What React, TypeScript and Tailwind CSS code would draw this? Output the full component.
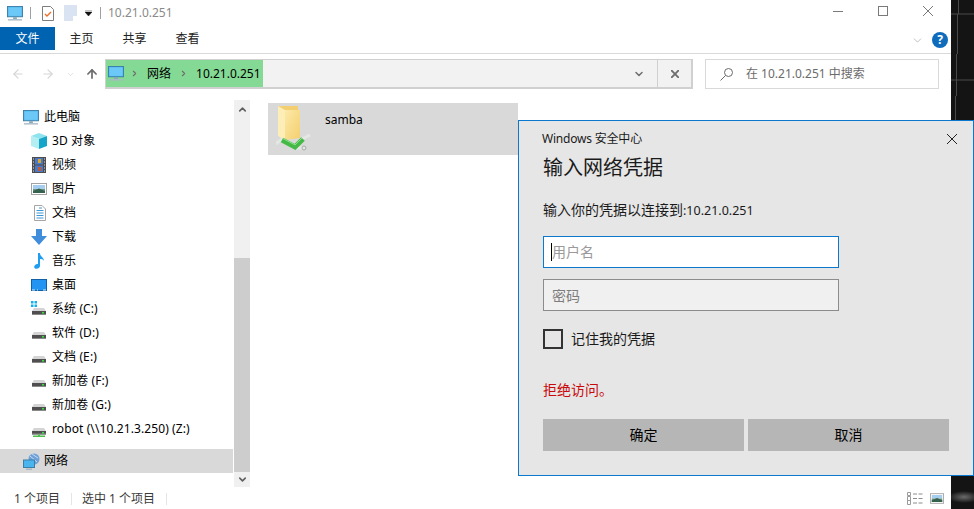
import React from 'react';
import { ArrowLeft, ArrowRight, ArrowUp, ChevronDown, ChevronRight, ChevronUp } from 'lucide-react';

const font = { fontFamily: '"Noto Sans", "Noto Sans CJK SC", sans-serif' };

const Monitor = ({ className = '' }: { className?: string }) => (
  <svg viewBox="0 0 17 16" className={className}>
    <rect x="0.5" y="0.5" width="16" height="11" fill="#4ab4ee" stroke="#3b7ea6" />
    <rect x="1.5" y="1.5" width="14" height="9" fill="#6cc9f7" />
    <rect x="6.5" y="12" width="4" height="2" fill="#8aa6b8" />
    <rect x="1" y="14" width="15" height="1.5" fill="#a9bac6" />
  </svg>
);

const Cube = () => (
  <svg viewBox="0 0 16 16" className="w-4 h-4">
    <path d="M8 0 L16 3 L8 6 L0 3 Z" fill="#8fe3ee" />
    <path d="M0 3 L8 6 V16 L0 13 Z" fill="#b5eef2" />
    <path d="M16 3 L8 6 V16 L16 13 Z" fill="#14a5c8" />
  </svg>
);

const Film = () => (
  <svg viewBox="0 0 14 16" className="w-[14px] h-4">
    <rect x="0" y="0" width="14" height="16" fill="#4d4d4d" />
    <rect x="3" y="1" width="8" height="6.5" fill="#4a79c9" />
    <rect x="3" y="8.5" width="8" height="6.5" fill="#4a79c9" />
    <rect x="6" y="2" width="3" height="4" fill="#d6a92c" />
    <rect x="6" y="10" width="3" height="4" fill="#c9592c" />
    <path d="M1 2h1M1 5h1M1 8h1M1 11h1M1 14h1M12 2h1M12 5h1M12 8h1M12 11h1M12 14h1" stroke="#e5e5e5" />
  </svg>
);

const Picture = ({ className = 'w-4 h-3' }: { className?: string }) => (
  <svg viewBox="0 0 16 12" className={className}>
    <rect x="0.5" y="0.5" width="15" height="11" fill="#fff" stroke="#a3a3a3" />
    <rect x="2" y="2" width="12" height="4" fill="#a5cdf0" />
    <rect x="2" y="6" width="12" height="4" fill="#6d9a82" />
    <path d="M2 8 L8 5.5 L14 8 V10 H2 Z" fill="#35614f" />
  </svg>
);

const Doc = () => (
  <svg viewBox="0 0 13 16" className="w-[13px] h-4">
    <path d="M1.5 .5 H9 L12.5 4 V15.5 H1.5 Z" fill="#fff" stroke="#a5a5a5" />
    <path d="M6 3h3M3.5 5.5h7M3.5 8h7M3.5 10.5h7M3.5 13h7" stroke="#3f97d8" />
  </svg>
);

const Download = () => (
  <svg viewBox="0 0 16 16" className="w-4 h-4">
    <path d="M5 0 H11 V7 H16 L8 16 L0 7 H5 Z" fill="#3f8ddb" />
  </svg>
);

const Music = () => (
  <svg viewBox="0 0 12 16" className="w-3 h-4">
    <path d="M5 0 H7 C7 4 11 4 11 8 C10 6 8 6 7 6 V13 C7 15 4 16.5 2 15.5 C0 14 2 10.5 5 11 Z" fill="#1f9df0" />
  </svg>
);

const Desktop = () => (
  <svg viewBox="0 0 16 12" className="w-4 h-3">
    <rect x="0.5" y="0.5" width="15" height="11" fill="#2295f2" stroke="#0f62a8" />
    <path d="M1 11h3M6 11h1M12 11h3" stroke="#d8eefc" />
  </svg>
);

const Drive = ({ win, net }: { win?: boolean; net?: boolean }) => (
  <svg viewBox="0 0 16 16" className="w-4 h-4">
    {win && <path d="M0 0h2.5v2.5H0zM3.5 0H6v2.5H3.5zM0 3.5h2.5V6H0zM3.5 3.5H6V6H3.5z" fill="#12b0ec" />}
    <path d="M3 7 H13 L15 10 H1 Z" fill="#d4d4d4" />
    <rect x="1" y="10" width="14" height={net ? 3.5 : 4} fill="#4f4f4f" />
    <rect x="1" y={net ? 12.5 : 13} width="14" height="1" fill="#8a8a8a" />
    <rect x="11" y="11" width="2" height="1.5" fill="#37e04a" />
    {net && <path d="M7 13.5h2v1h5v1.5H2v-1.5h5z" fill="#4cc04a" />}
  </svg>
);

const NetIcon = () => (
  <svg viewBox="0 0 17 17" className="w-[17px] h-[17px]">
    <circle cx="11" cy="6" r="5.5" fill="#6d9fd8" />
    <path d="M7 3 L14 9 M9 1 L15 5" stroke="#c6dcf2" />
    <rect x="0.5" y="7" width="11" height="7.5" fill="#4ab4ee" stroke="#3b7ea6" />
    <rect x="3" y="15.5" width="6" height="1.5" fill="#a9bac6" />
  </svg>
);

const Share = () => (
  <svg viewBox="0 0 36 46" className="w-9 h-[46px]">
    <defs>
      <linearGradient id="folderFront" x1="0" y1="0" x2="1" y2="1">
        <stop offset="0" stopColor="#fce9a8" />
        <stop offset="1" stopColor="#f4cf6e" />
      </linearGradient>
    </defs>
    <path d="M2 0 H22 V30 H2 Z" fill="#f3cf72" />
    <path d="M2 0 L9 4 V34 L2 30 Z" fill="#fdeeb8" />
    <path d="M9 4 H24 V32 L9 34 Z" fill="url(#folderFront)" />
    <path d="M-1 38 L7 33" stroke="#e4e8e5" strokeWidth="3" />
    <path d="M26 33 L34 29" stroke="#e4e8e5" strokeWidth="3" />
    <path d="M20 42 L28 42" stroke="#e4e8e5" strokeWidth="3" />
    <path d="M6 34 L19 41 L27 33" stroke="#45b945" strokeWidth="5" fill="none" />
    <path d="M7 32.5 L19 39 L26 32" stroke="#8be08b" strokeWidth="1" fill="none" />
    <circle cx="28" cy="42" r="2" fill="#e4e8e5" stroke="#a5aca8" />
  </svg>
);

const Cross = ({ className = '', stroke = '#000', weight = 1 }: { className?: string; stroke?: string; weight?: number }) => (
  <svg viewBox="0 0 10 10" className={className}>
    <path d="M0 0 L10 10 M10 0 L0 10" stroke={stroke} strokeWidth={weight} />
  </svg>
);

const navItems: { label: string; icon: React.ReactNode }[] = [
  { label: '3D 对象', icon: <Cube /> },
  { label: '视频', icon: <Film /> },
  { label: '图片', icon: <Picture /> },
  { label: '文档', icon: <Doc /> },
  { label: '下载', icon: <Download /> },
  { label: '音乐', icon: <Music /> },
  { label: '桌面', icon: <Desktop /> },
  { label: '系统 (C:)', icon: <Drive win /> },
  { label: '软件 (D:)', icon: <Drive /> },
  { label: '文档 (E:)', icon: <Drive /> },
  { label: '新加卷 (F:)', icon: <Drive /> },
  { label: '新加卷 (G:)', icon: <Drive /> },
  { label: 'robot (\\\\10.21.3.250) (Z:)', icon: <Drive net /> },
];

const Nav = () => (
  <div className="w-[250px] h-[387px] flex shrink-0">
    <div className="w-[233px] pt-[5px] text-[12px] text-black">
      <div className="h-6 flex items-center pl-[23px] gap-[5px]">
        <Monitor className="w-4 h-[15px]" />
        <span>此电脑</span>
      </div>
      {navItems.map((item) => (
        <div key={item.label} className="h-6 flex items-center">
          <div className="w-[52px] pl-[31px] pr-[5px] flex justify-center shrink-0">{item.icon}</div>
          <span className="whitespace-nowrap tracking-[0.1px]">{item.label}</span>
        </div>
      ))}
      <div className="mt-[8px] h-6 flex items-center pl-[23px] gap-[4px] bg-[#d9d9d9]">
        <NetIcon />
        <span>网络</span>
      </div>
    </div>
    <div className="w-4 ml-px bg-[#f0f0f0] flex flex-col">
      <div className="h-[158px] pt-1 flex justify-center">
        <ChevronUp size={11} strokeWidth={3.5} className="text-[#606060]" />
      </div>
      <div className="h-[214px] bg-[#cdcdcd]" />
      <div className="flex-1 flex items-center justify-center">
        <ChevronDown size={11} strokeWidth={3.5} className="text-[#606060]" />
      </div>
    </div>
  </div>
);

const Dialog = () => (
  <div className="absolute left-[518px] top-[120px] w-[456px] h-[356px] border border-[#0b78cf] bg-[#e6e6e6] pl-6 pr-6 text-black">
    <div className="flex justify-between items-center pt-[7px] h-[28px] text-[12px] text-[#1a1a1a]">
      <span className="tracking-[-0.2px] -ml-px">Windows 安全中心</span>
      <Cross className="w-[10px] h-[10px] mr-[-8px]" stroke="#222" />
    </div>
    <div className="text-[20px] leading-[28px] mt-[5px] text-[#1a1a1a]">输入网络凭据</div>
    <div className="text-[14px] leading-[18px] mt-[19px] text-[#1a1a1a]">
      输入你的凭据以连接到<span className="text-[12.5px]">:10.21.0.251</span>
    </div>
    <div className="mt-[16px] w-[296px] h-[32px] border-[1.5px] border-[#0b78cf] bg-white flex items-center pl-[7px] pb-px text-[14px] text-[#9a9a9a]">
      <span className="w-px h-[18px] bg-black" />
      <span>用户名</span>
    </div>
    <div className="mt-[11px] w-[296px] h-[32px] border-[1.5px] border-[#8c8c8c] bg-[#f0f0f0] flex items-center pl-[8px] text-[14px] text-[#7d7d7d]">
      密码
    </div>
    <div className="mt-[18px] h-5 flex items-center gap-2 text-[14px] text-[#1a1a1a]">
      <div className="w-5 h-5 border-2 border-[#333]" />
      <span className="-mt-px">记住我的凭据</span>
    </div>
    <div className="mt-[32px] text-[14px] leading-[18px] text-[#c90a0a]">拒绝访问。</div>
    <div className="mt-[20px] flex gap-1 w-[406px] text-[14px]">
      <div className="flex-1 h-8 pb-px bg-[#b6b6b6] flex items-center justify-center">确定</div>
      <div className="flex-1 h-8 pb-px bg-[#b6b6b6] flex items-center justify-center">取消</div>
    </div>
  </div>
);

const DesktopStrip = () => (
  <svg viewBox="0 0 23 509" className="w-[23px] h-[509px] shrink-0 bg-[#141414]">
    <defs>
      <radialGradient id="glow" cx="0.5" cy="0.5" r="0.5">
        <stop offset="0" stopColor="#6a6a6a" />
        <stop offset="1" stopColor="#141414" />
      </radialGradient>
    </defs>
    <path d="M0 14H23M0 80H23" stroke="#4a4a4a" />
    <path d="M7.5 0V14M6.5 14V54M5.5 54V96M4.5 96V120" stroke="#4a4a4a" />
    <ellipse cx="13" cy="497" rx="16" ry="6" fill="url(#glow)" />
  </svg>
);

export default function App() {
  return (
    <div style={font} className="relative w-[974px] h-[509px] overflow-hidden flex">
      <div className="w-[951px] h-full bg-white flex flex-col shrink-0">
        {/* title bar */}
        <div className="h-[27px] flex items-center pl-[7px] pb-px text-[12px] text-[#8a8a8a] shrink-0">
          <Monitor className="w-4 h-[15px]" />
          <span className="ml-[7px] w-px h-3 bg-[#a0a0a0]" />
          <svg viewBox="0 0 12 15" className="ml-[11px] w-3 h-[15px]">
            <path d="M.5.5H8.5L11.5 3.5V14.5H.5Z" fill="#fff" stroke="#7d7d7d" />
            <path d="M3 8l2 2 4-4" stroke="#e8702a" strokeWidth="1.4" fill="none" />
          </svg>
          <svg viewBox="0 0 13 16" className="ml-[10px] w-[13px] h-4">
            <rect x="0" y="0" width="13" height="16" fill="#d9e3f2" />
            <rect x="9" y="11" width="4" height="5" fill="#fff" />
          </svg>
          <svg viewBox="0 0 7 6" className="ml-[8px] w-[7px] h-[6px]">
            <path d="M0 0h7M0 2h7L3.5 6Z" fill="#111" stroke="#111" strokeWidth=".5" />
          </svg>
          <span className="ml-[8px] w-px h-3 bg-[#a0a0a0]" />
          <span className="ml-[7px]">10.21.0.251</span>
          <div className="ml-auto flex items-center gap-[35px] pr-[18px] mb-[4px]">
            <svg viewBox="0 0 10 10" className="w-[10px] h-[10px]">
              <path d="M0 5.5H10" stroke="#7a7a7a" />
            </svg>
            <svg viewBox="0 0 10 10" className="w-[10px] h-[10px]">
              <rect x=".5" y=".5" width="9" height="9" fill="none" stroke="#7a7a7a" />
            </svg>
            <Cross className="w-[10px] h-[10px]" stroke="#7a7a7a" />
          </div>
        </div>

        {/* ribbon tabs */}
        <div className="h-[27px] border-b border-[#d9d9d9] flex items-start text-[12px] text-[#222] shrink-0">
          <div className="w-[55px] h-[23px] bg-[#0063b1] text-white flex items-center justify-center">文件</div>
          <div className="w-[53px] h-[23px] pt-px flex items-center justify-center">主页</div>
          <div className="w-[53px] h-[23px] pt-px flex items-center justify-center">共享</div>
          <div className="w-[53px] h-[23px] pt-px flex items-center justify-center">查看</div>
          <div className="ml-auto flex items-center gap-[8px] pr-[3px] pt-[5px]">
            <ChevronDown size={13} strokeWidth={1} className="text-[#8a8a8a]" />
            <div className="w-4 h-4 rounded-full bg-[#0f6cbd] text-white text-[12px] font-bold flex items-center justify-center">?</div>
          </div>
        </div>

        {/* address row */}
        <div className="h-[46px] pt-[5px] flex items-start shrink-0">
          <div className="w-[105px] h-[30px] flex items-center pl-[11px]">
            <ArrowLeft size={14} strokeWidth={2} className="text-[#d5d5d5]" />
            <ArrowRight size={14} strokeWidth={2} className="text-[#d5d5d5] ml-[16px]" />
            <ChevronDown size={9} strokeWidth={2} className="text-[#d5d5d5] ml-[11px]" />
            <ArrowUp size={14} strokeWidth={3} className="text-[#6e6e6e] ml-[10px]" />
          </div>
          <div className="w-[588px] h-[30px] border border-[#d0d0d0] border-b-2 border-r-2 bg-[#f2f2f2] flex items-center text-[12px] text-black">
            <div className="w-[157px] h-full bg-[#84d994] flex items-center pl-[2px] whitespace-nowrap">
              <Monitor className="w-4 h-[15px] shrink-0" />
              <ChevronRight size={9} strokeWidth={3} className="text-[#6e6e6e] ml-[6px] shrink-0" />
              <span className="ml-[8px]">网络</span>
              <ChevronRight size={9} strokeWidth={3} className="text-[#6e6e6e] ml-[8px] shrink-0" />
              <span className="ml-[8px]">10.21.0.251</span>
            </div>
            <div className="ml-auto w-[38px] h-full flex items-center justify-center border-r border-[#d0d0d0]">
              <ChevronDown size={12} strokeWidth={3} className="text-[#6e6e6e]" />
            </div>
            <div className="w-[33px] h-full flex items-center justify-center">
              <Cross className="w-[8px] h-[8px]" stroke="#6e6e6e" weight={2.4} />
            </div>
          </div>
          <div className="ml-[12px] w-[234px] h-[30px] border border-[#d9d9d9] flex items-center pl-[14px] gap-[13px] text-[12px] text-[#6b6b6b]">
            <svg viewBox="0 0 13 13" className="w-[13px] h-[13px]">
              <circle cx="8.5" cy="4.5" r="4" fill="none" stroke="#6b6b6b" />
              <path d="M5.5 7.5L.5 12.5" stroke="#6b6b6b" />
            </svg>
            <span>在 10.21.0.251 中搜索</span>
          </div>
        </div>

        {/* main */}
        <div className="flex shrink-0">
          <Nav />
          <div className="flex-1 pl-[18px] pt-[3px]">
            <div className="w-[250px] h-[52px] bg-[#d9d9d9] flex items-start pl-[8px] pt-[3px] text-[12px] text-black">
              <Share />
              <span className="ml-[13px] mt-[5px]">samba</span>
            </div>
          </div>
        </div>

        {/* status bar */}
        <div className="flex-1 flex items-center pl-[14px] pt-px text-[12px] text-[#3b3b3b]">
          <span>1 个项目</span>
          <span className="ml-[11px] w-px h-3 bg-[#e5e5e5]" />
          <span className="ml-[10px]">选中 1 个项目</span>
          <span className="ml-[11px] w-px h-3 bg-[#e5e5e5]" />
          <div className="ml-auto flex items-center gap-[7px] pr-[7px]">
            <svg viewBox="0 0 16 13" className="w-4 h-[13px]">
              <path d="M.5.5h3v3h-3zM.5 4.5h3v4h-3zM.5 8.5h3v4h-3z" fill="none" stroke="#9a9a9a" />
              <path d="M6 2h4M11.5 2h4M6 6.5h4M11.5 6.5h4M6 11h4M11.5 11h4" stroke="#8c8c8c" />
            </svg>
            <Picture className="w-[14px] h-[11px]" />
          </div>
        </div>
      </div>
      <DesktopStrip />
      <Dialog />
    </div>
  );
}
